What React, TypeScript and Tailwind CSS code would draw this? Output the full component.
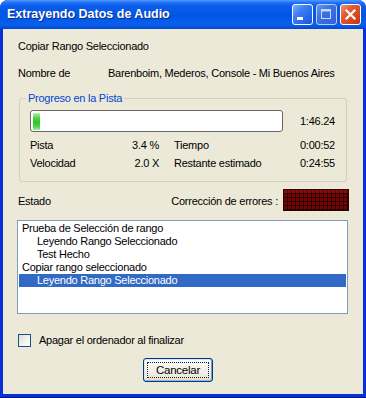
import React from "react";

function TitleButton({ kind }: { kind: "min" | "max" | "close" }) {
  const base =
    "w-[21px] h-[21px] rounded-[3px] border flex items-center justify-center";
  const bg =
    kind === "close"
      ? "border-white bg-[linear-gradient(135deg,#f0937a_0%,#e25a35_35%,#d2441c_75%,#b8330f_100%)]"
      : kind === "min"
      ? "border-white bg-[linear-gradient(135deg,#7fb0ff_0%,#3f7ff5_35%,#2563e8_75%,#1b54d8_100%)]"
      : "border-[#b9cdf5] bg-[linear-gradient(135deg,#6797ef_0%,#3a72e4_40%,#2c62d8_100%)]";
  return (
    <div className={`${base} ${bg}`}>
      <svg width="19" height="19" viewBox="0 0 19 19">
        {kind === "min" && <rect x="4" y="12" width="6" height="3" fill="#fff" />}
        {kind === "max" && (
          <g fill="none" stroke="#c8d7f5">
            <rect x="4.5" y="4.5" width="9" height="9" />
            <line x1="4.5" y1="5.5" x2="13.5" y2="5.5" strokeWidth="2" />
          </g>
        )}
        {kind === "close" && (
          <g stroke="#fff" strokeWidth="2.2" strokeLinecap="square">
            <line x1="5.5" y1="5.5" x2="13.5" y2="13.5" />
            <line x1="13.5" y1="5.5" x2="5.5" y2="13.5" />
          </g>
        )}
      </svg>
    </div>
  );
}

function Led() {
  return (
    <svg width="66" height="22" viewBox="0 0 66 22">
      <defs>
        <pattern id="cell" x="1" y="1" width="4" height="4" patternUnits="userSpaceOnUse">
          <rect width="4" height="4" fill="#2e0000" />
          <rect width="3" height="3" fill="#760606" />
        </pattern>
      </defs>
      <rect width="66" height="22" fill="#2e0000" />
      <rect x="1" y="1" width="64" height="20" fill="url(#cell)" />
      <rect x="1" y="1" width="64" height="3" fill="#a01010" opacity="0.45" />
    </svg>
  );
}

const rows: { text: string; indent: boolean; selected?: boolean }[] = [
  { text: "Prueba de Selección de rango", indent: false },
  { text: "Leyendo Rango Seleccionado", indent: true },
  { text: "Test Hecho", indent: true },
  { text: "Copiar rango seleccionado", indent: false },
  { text: "Leyendo Rango Seleccionado", indent: true, selected: true },
];

export default function App() {
  return (
    <div className="w-[366px] h-[398px] flex flex-col bg-[#0831d9] rounded-t-[8px] overflow-hidden font-['Liberation_Sans',Arial,sans-serif] border-b border-b-[#00138c]">
      {/* Title bar */}
      <div className="h-[29px] shrink-0 flex items-center pl-[7px] pr-[5px] bg-[linear-gradient(180deg,#4f9aff_0%,#1f6ef6_10%,#0a5de9_22%,#0056e6_55%,#0a60ec_85%,#0046d2_100%)]">
        <div className="flex-1 text-white font-bold text-[12.5px] [text-shadow:1px_1px_#0b2a8e]">
          Extrayendo Datos de Audio
        </div>
        <div className="flex gap-[3px] items-center">
          <TitleButton kind="min" />
          <TitleButton kind="max" />
          <TitleButton kind="close" />
        </div>
      </div>

      {/* Body */}
      <div className="flex-1 mx-[3px] mb-[3px] bg-[#ece9d8] flex flex-col px-[14px] text-[11px] leading-[13px] tracking-[-0.25px] text-black">
        <div className="mt-[11px] h-[13px] pl-[1px]">Copiar Rango Seleccionado</div>
        <div className="mt-[14px] h-[13px] flex pl-[1px]">
          <span className="w-[90px]">Nombre de</span>
          <span>Barenboim, Mederos, Console - Mi Buenos Aires</span>
        </div>

        {/* Group box */}
        <div className="relative mt-[18px] mx-[2px] h-[84px] border border-[#d0d0bf] rounded-[3px] pt-[11px] pl-[10px] pr-[10px]">
          <span className="absolute -top-[7px] left-[6px] px-[2px] bg-[#ece9d8] text-[#0046d5]">
            Progreso en la Pista
          </span>
          <div className="flex items-center">
            <div className="w-[253px] h-[22px] border border-[#686868] rounded-[3px] bg-white pl-[2px] pt-[2px]">
              <div className="w-[7px] h-[17px] bg-[linear-gradient(180deg,#b5f0ae_0%,#4fd145_30%,#2bc524_55%,#55d24b_80%,#a7eb9f_100%)]" />
            </div>
            <span className="ml-[17px]">1:46.24</span>
          </div>
          <div className="mt-[4px] h-[18px] flex items-center">
            <span className="w-[100px]">Pista</span>
            <span className="w-[29px] text-right">3.4 %</span>
            <span className="ml-[15px] w-[126px]">Tiempo</span>
            <span>0:00:52</span>
          </div>
          <div className="h-[18px] flex items-center">
            <span className="w-[100px]">Velocidad</span>
            <span className="w-[29px] text-right">2.0 X</span>
            <span className="ml-[15px] w-[126px]">Restante estimado</span>
            <span>0:24:55</span>
          </div>
        </div>

        {/* Estado row */}
        <div className="mt-[7px] h-[22px] flex items-center">
          <span className="flex-1 pl-[1px] pt-[3px]">Estado</span>
          <span className="pt-[3px] mr-[5px]">Corrección de errores :</span>
          <Led />
        </div>

        {/* List box */}
        <div className="mt-[9px] h-[94px] w-[331px] border border-[#7f9db9] bg-white pt-[1px] px-[1px]">
          {rows.map((r, i) => (
            <div
              key={i}
              className={`h-[13px] leading-[13px] ${r.indent ? "pl-[18px]" : "pl-[3px]"} ${
                r.selected ? "bg-[#316ac5] text-white" : ""
              }`}
            >
              {r.text}
            </div>
          ))}
        </div>

        {/* Checkbox */}
        <div className="mt-[20px] h-[13px] flex items-center pl-[1px]">
          <div className="w-[13px] h-[13px] border border-[#1c5180] bg-[linear-gradient(135deg,#dcdcd7_0%,#f4f4f0_60%,#ffffff_100%)]" />
          <span className="ml-[8px]">Apagar el ordenador al finalizar</span>
        </div>

        {/* Button */}
        <div className="mt-[11px] flex">
          <div className="relative ml-[126px] w-[70px] h-[24px] rounded-[3px] border border-[#003c74] bg-[linear-gradient(180deg,#ffffff_0%,#f4f3ee_40%,#ece9d8_85%,#d6d0c5_100%)] shadow-[inset_0_-1px_#97b7eb,inset_1px_0_#cee7ff,inset_-1px_0_#69a0e9,inset_0_1px_#cee7ff] flex items-center justify-center">
            <span className="absolute inset-[3px] border border-dotted border-[#222]" />
            <span className="text-[11.5px]">Cancelar</span>
          </div>
        </div>
      </div>
    </div>
  );
}
